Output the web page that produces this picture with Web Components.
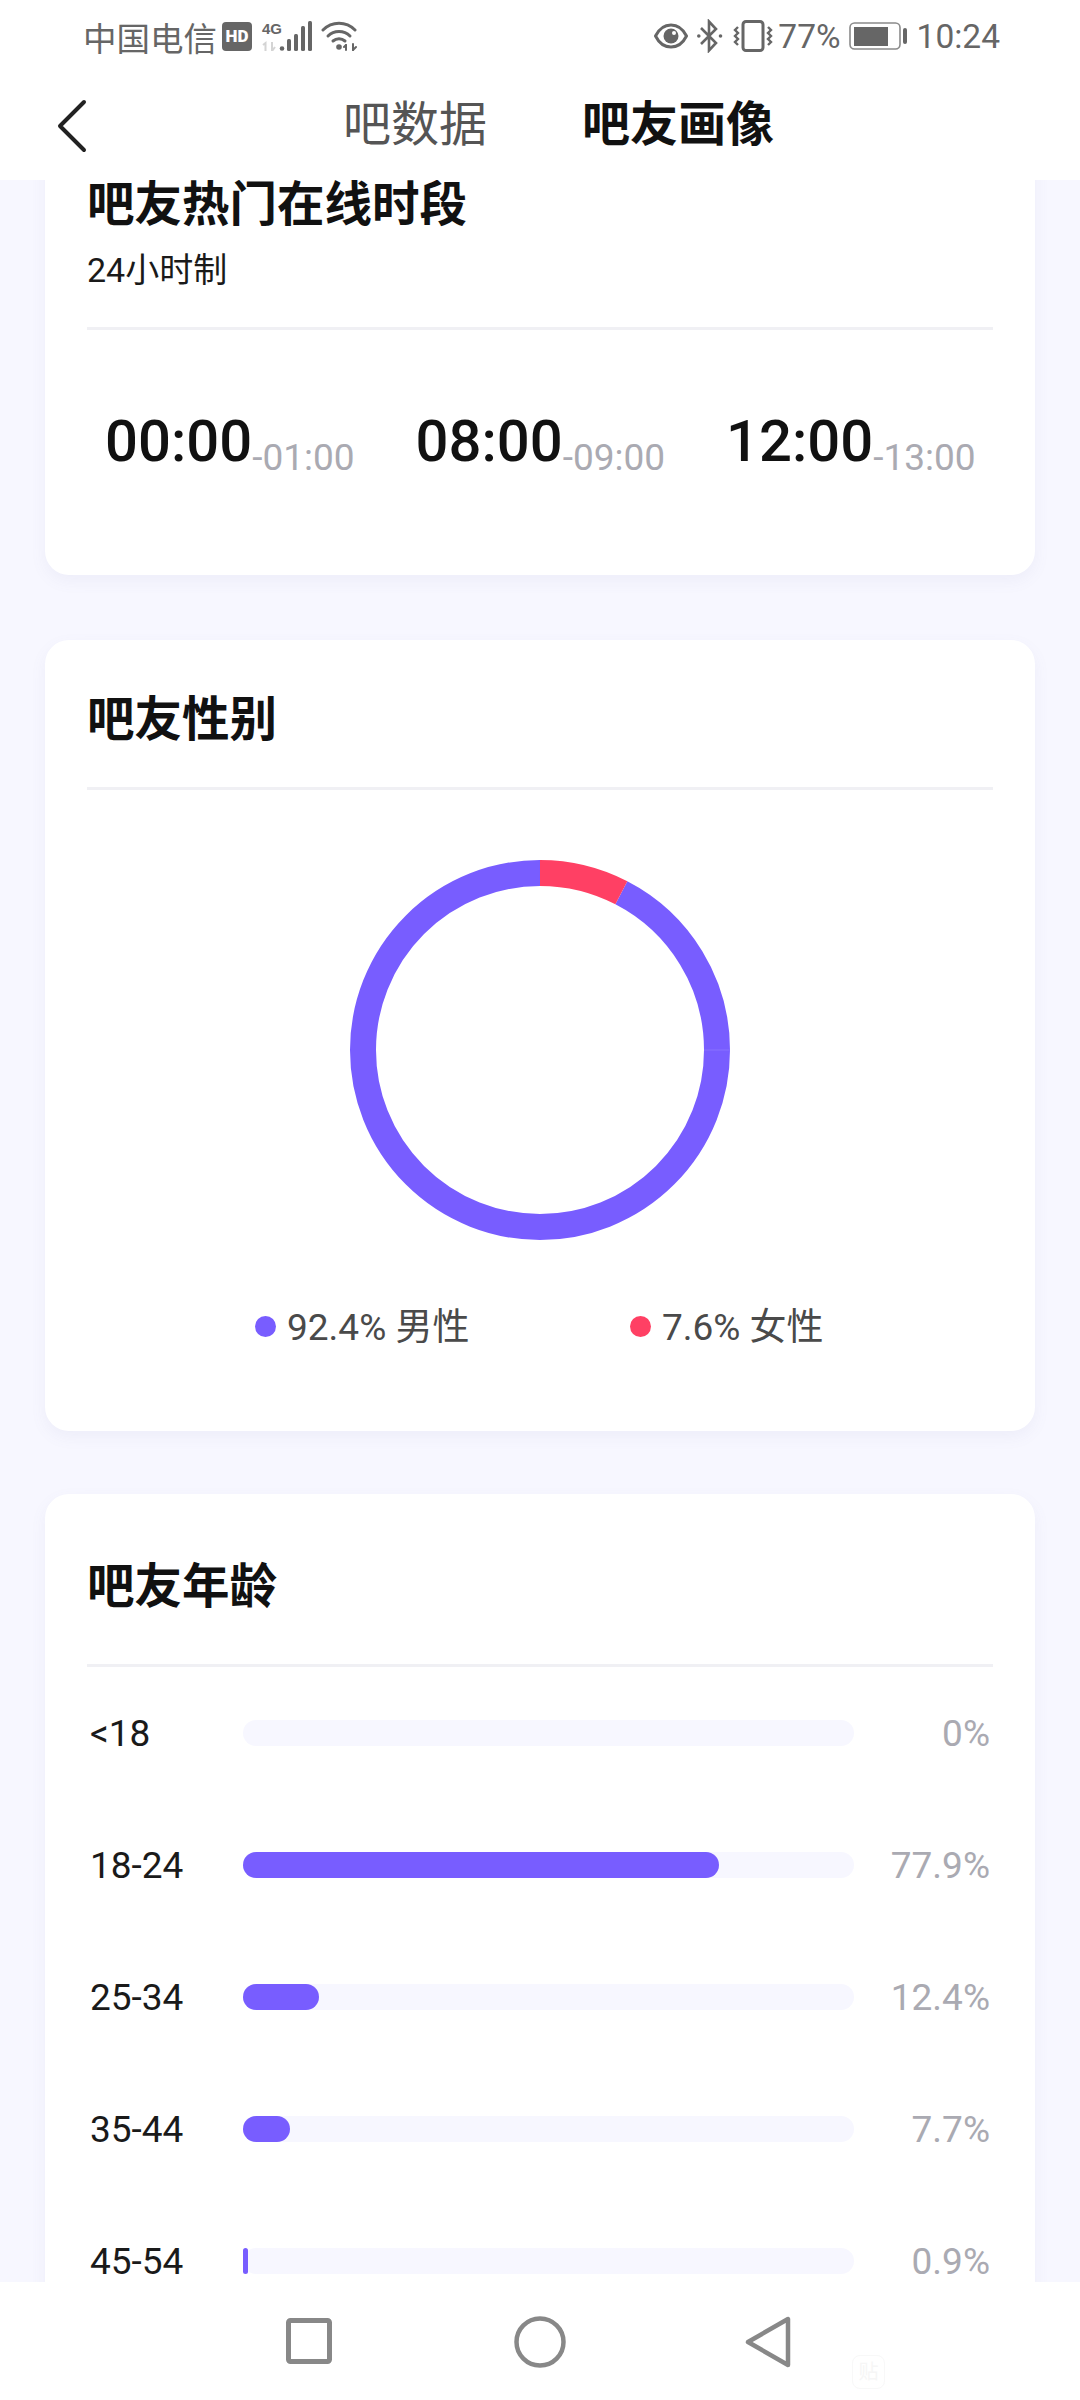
<!DOCTYPE html>
<html lang="zh">
<head>
<meta charset="utf-8">
<title>吧友画像</title>
<style>
  html, body { margin: 0; padding: 0; }
  body { font-family: Roboto, "Noto Sans CJK SC", sans-serif; }
</style>
</head>
<body>
<phone-screen>
  <status-bar slot="top"></status-bar>
  <tab-header slot="top"></tab-header>

  <stat-card title="吧友热门在线时段" sub="24小时制" style="--card-top:-55px;--head-top:50px;--head-bottom:33px">
    <div style="display:grid;grid-template-columns:repeat(3,310.500px);padding:70px 0 78px 18px">
      <hour-slot from="00:00" to="-01:00"></hour-slot>
      <hour-slot from="08:00" to="-09:00"></hour-slot>
      <hour-slot from="12:00" to="-13:00"></hour-slot>
    </div>
  </stat-card>

  <stat-card title="吧友性别" style="--card-top:65px;--head-top:50px;--head-bottom:37px">
    <gender-donut male="92.4" female="7.6"></gender-donut>
  </stat-card>

  <stat-card title="吧友年龄" style="--card-top:63px;--head-top:63px;--head-bottom:47px">
    <age-row label="&lt;18" pct="0"></age-row>
    <age-row label="18-24" pct="77.9"></age-row>
    <age-row label="25-34" pct="12.4"></age-row>
    <age-row label="35-44" pct="7.7"></age-row>
    <age-row label="45-54" pct="0.9"></age-row>
  </stat-card>

  <nav-buttons slot="bottom"></nav-buttons>
</phone-screen>

<script>
(function () {
  const FONT = 'Roboto, "Noto Sans CJK SC", sans-serif';

  class PhoneScreen extends HTMLElement {
    connectedCallback() {
      this.attachShadow({ mode: "open" }).innerHTML = `
      <style>
        :host { display: flex; flex-direction: column; width: 1080px; height: 2400px; overflow: hidden; background: #fff; font-family: ${FONT}; }
        .scroll { flex: 1; min-height: 0; overflow: hidden; background: #f7f7ff; padding: 0 45px; }
      </style>
      <slot name="top"></slot>
      <div class="scroll"><slot></slot></div>
      <slot name="bottom"></slot>`;
    }
  }

  class StatusBar extends HTMLElement {
    connectedCallback() {
      this.attachShadow({ mode: "open" }).innerHTML = `
      <style>
        :host { display: flex; justify-content: space-between; align-items: center; height: 72px; padding: 0 80px 0 83px; color: #666; font-size: 33.500px; }
        .group { display: flex; align-items: center; }
        svg { display: block; flex: none; }
        .hd { box-sizing: border-box; width: 30px; height: 29px; margin-left: 5px; background: #666; color: #fff; border-radius: 4px; font: 900 17px/29px Roboto, sans-serif; text-align: center; }
        .net { position: relative; width: 50px; height: 30px; margin-left: 10px; }
        .net b { position: absolute; left: 0; top: 0; font: 700 15px/15px "Liberation Sans", sans-serif; color: #666; }
        .net svg { position: absolute; left: 0; top: 0; }
      </style>
      <div class="group">
        <span>中国电信</span>
        <span class="hd">HD</span>
        <span class="net"><b>4G</b>
          <svg width="50" height="30" viewBox="0 0 50 30">
            <path d="M1 24l2.500-2v8M10 21v9M10 30l3-4" fill="none" stroke="#d4d4d4" stroke-width="2"/>
            <circle cx="20" cy="27.500" r="2.300" fill="#666"/>
            <rect x="25" y="18" width="4" height="12" rx="1.500" fill="#666"/>
            <rect x="32" y="13" width="4" height="17" rx="1.500" fill="#666"/>
            <rect x="39" y="5" width="4" height="25" rx="1.500" fill="#666"/>
            <rect x="46" y="0" width="4" height="30" rx="1.500" fill="#666"/>
          </svg>
        </span>
        <svg style="margin-left:9px" width="36" height="30" viewBox="0 0 36 30" fill="none" stroke="#666" stroke-width="3" stroke-linecap="round">
          <path d="M2 9C11 0 25 0 34 9"/>
          <path d="M7 15c6-6 16-6 22 0"/>
          <path d="M12 20c3.500-3 8.500-3 12 0"/>
          <circle cx="18" cy="26" r="2.800" fill="#666" stroke="none"/>
          <path d="M25 24v5M32 23v6" stroke-width="2"/>
          <path d="M23 26l2-2M32 29l3-3" stroke-width="2"/>
        </svg>
      </div>
      <div class="group">
        <svg width="34" height="28" viewBox="0 0 34 28">
          <path d="M1.500 14C5 7 10.500 3 17 3s12 4 15.500 11C29 21 23.500 25 17 25S5 21 1.500 14z" fill="none" stroke="#666" stroke-width="3"/>
          <circle cx="17" cy="14" r="7.500" fill="#666"/>
          <circle cx="20" cy="11" r="2" fill="#fff"/>
        </svg>
        <svg style="margin-left:9px" width="26" height="34" viewBox="0 0 26 34" fill="none" stroke="#666" stroke-width="2.600">
          <path d="M4 9l15 15-7 7.500V2.500L19 10 4 25"/>
          <circle cx="1.800" cy="17" r="1.800" fill="#666" stroke="none"/>
          <circle cx="23.500" cy="17" r="1.800" fill="#666" stroke="none"/>
        </svg>
        <svg style="margin-left:9px" width="42" height="32" viewBox="0 0 42 32" fill="none" stroke="#666">
          <rect x="11" y="1.500" width="20" height="29" rx="3" stroke-width="3"/>
          <path d="M6 7l-3 3 3 3-3 3 3 3-3 3 3 3M36 7l3 3-3 3 3 3-3 3 3 3-3 3" stroke-width="2.400"/>
        </svg>
        <span style="margin-left:4px">77%</span>
        <svg style="margin-left:8px" width="58" height="28" viewBox="0 0 58 28">
          <rect x="1" y="1" width="50" height="26" rx="4.500" fill="none" stroke="#8a8a8a" stroke-width="1.600"/>
          <rect x="5" y="5" width="34" height="19" fill="#666"/>
          <rect x="54" y="6" width="4" height="16" rx="2" fill="#666"/>
        </svg>
        <span style="margin-left:10px">10:24</span>
      </div>`;
    }
  }

  class TabHeader extends HTMLElement {
    connectedCallback() {
      this.attachShadow({ mode: "open" }).innerHTML = `
      <style>
        :host { display: flex; align-items: center; height: 108px; background: #fff; position: relative; z-index: 2; }
        svg { flex: none; margin-left: 56px; }
        .tab { font-size: 48px; color: #555; margin-left: 255px; line-height: 60px; padding-bottom: 2px; }
        .on { font-weight: 700; color: #111; margin-left: 95px; }
      </style>
      <svg width="32" height="54" viewBox="0 0 32 54" fill="none" stroke="#222" stroke-width="4" stroke-linecap="round" stroke-linejoin="round">
        <path d="M28 3L4 27l24 24"/>
      </svg>
      <span class="tab">吧数据</span>
      <span class="tab on">吧友画像</span>`;
    }
  }

  class StatCard extends HTMLElement {
    connectedCallback() {
      const sub = this.getAttribute("sub");
      this.attachShadow({ mode: "open" }).innerHTML = `
      <style>
        :host { display: block; margin-top: var(--card-top, 64px); padding: 0 42px; background: #fff; border-radius: 24px; box-shadow: 0 6px 16px rgba(120,110,170,.07); }
        header { padding: var(--head-top) 0 var(--head-bottom); border-bottom: 3px solid #f0f0f4; }
        h2 { margin: 0; font-size: 47.500px; line-height: 60px; font-weight: 700; color: #111; }
        p { margin: 11px 0 0; font-size: 34px; line-height: 48px; color: #1a1a1a; }
      </style>
      <header>
        <h2>${this.getAttribute("title")}</h2>
        ${sub ? `<p>${sub}</p>` : ""}
      </header>
      <slot></slot>`;
    }
  }

  class HourSlot extends HTMLElement {
    connectedCallback() {
      this.attachShadow({ mode: "open" }).innerHTML = `
      <style>
        :host { display: block; white-space: nowrap; line-height: 82px; }
        b { font-size: 58px; font-weight: 500; color: #111; }
        span { font-size: 37px; color: #aaaab2; position: relative; top: 9px; }
      </style>
      <b>${this.getAttribute("from")}</b><span>${this.getAttribute("to")}</span>`;
    }
  }

  class GenderDonut extends HTMLElement {
    // ring segment from deg a to deg b, clockwise from 12 o'clock
    arc(a, b, color) {
      const R = 177;
      const pt = (d) => {
        const r = (d * Math.PI) / 180;
        return `${(190 + R * Math.sin(r)).toFixed(2)} ${(190 - R * Math.cos(r)).toFixed(2)}`;
      };
      const large = b - a > 180 ? 1 : 0;
      return `<path d="M${pt(a)}A${R} ${R} 0 ${large} 1 ${pt(b)}" fill="none" stroke="${color}" stroke-width="26"/>`;
    }
    connectedCallback() {
      const male = this.getAttribute("male");
      const female = this.getAttribute("female");
      const split = (Number(female) / 100) * 360;
      this.attachShadow({ mode: "open" }).innerHTML = `
      <style>
        :host { display: block; padding: 70px 0 78px; }
        svg.ring { display: block; margin: 0 auto; }
        .legend { display: grid; grid-template-columns: repeat(2, 375px); padding: 63px 0 0 168px; font-size: 37px; line-height: 50px; color: #4a4a4a; }
        .item { display: flex; align-items: center; }
        i { width: 21px; height: 21px; border-radius: 50%; margin-right: 11px; margin-top: -4px; }
      </style>
      <svg class="ring" width="380" height="380" viewBox="0 0 380 380">
        ${this.arc(split, 90, "#785dff")}
        ${this.arc(90, 360, "#785dff")}
        ${this.arc(0, split, "#ff4064")}
        <rect x="354" y="189.500" width="26" height="1" fill="#8772ff"/>
      </svg>
      <div class="legend">
        <div class="item"><i style="background:#785dff"></i>${male}% 男性</div>
        <div class="item"><i style="background:#ff4064"></i>${female}% 女性</div>
      </div>`;
    }
  }

  class AgeRow extends HTMLElement {
    connectedCallback() {
      const pct = this.getAttribute("pct");
      this.attachShadow({ mode: "open" }).innerHTML = `
      <style>
        :host { display: grid; grid-template-columns: 156px 611px 1fr; align-items: center; height: 132px; font-size: 37px; }
        .label { color: #1a1a1a; padding-left: 3px; }
        .track { height: 26px; border-radius: 13px; background: #f7f7ff; }
        .fill { height: 100%; border-radius: 13px; background: #785dff; }
        .pct { text-align: right; color: #aaaab2; padding-right: 3px; }
      </style>
      <span class="label">${this.getAttribute("label")}</span>
      <div class="track"><div class="fill" style="width:${pct}%"></div></div>
      <span class="pct">${pct}%</span>`;
    }
  }

  class NavButtons extends HTMLElement {
    connectedCallback() {
      this.attachShadow({ mode: "open" }).innerHTML = `
      <style>
        :host { display: flex; align-items: flex-start; height: 118px; padding: 34px 0 0 286px; box-sizing: border-box; background: #fff; position: relative; }
        svg { display: block; flex: none; }
        .mark { position: absolute; left: 852px; top: 73px; width: 33px; height: 34px; box-sizing: border-box; border: 1px solid #f8f8f8; border-radius: 8px; color: #f6f6f6; font-size: 20px; line-height: 32px; text-align: center; }
      </style>
      <svg style="margin-top:2px" width="46" height="46" viewBox="0 0 46 46" fill="none" stroke="#888" stroke-width="5" stroke-linejoin="round">
        <rect x="2.500" y="2.500" width="41" height="41" rx="2"/>
      </svg>
      <svg style="margin-left:182px" width="52" height="52" viewBox="0 0 52 52" fill="none" stroke="#888" stroke-width="4.500">
        <circle cx="26" cy="26" r="23.500"/>
      </svg>
      <svg style="margin-left:179px" width="46" height="52" viewBox="0 0 46 52" fill="none" stroke="#888" stroke-width="4.500" stroke-linejoin="round">
        <path d="M43 3v46L3 26z"/>
      </svg>
      <span class="mark">贴</span>`;
    }
  }

  customElements.define("phone-screen", PhoneScreen);
  customElements.define("status-bar", StatusBar);
  customElements.define("tab-header", TabHeader);
  customElements.define("stat-card", StatCard);
  customElements.define("hour-slot", HourSlot);
  customElements.define("gender-donut", GenderDonut);
  customElements.define("age-row", AgeRow);
  customElements.define("nav-buttons", NavButtons);
})();
</script>
</body>
</html>
